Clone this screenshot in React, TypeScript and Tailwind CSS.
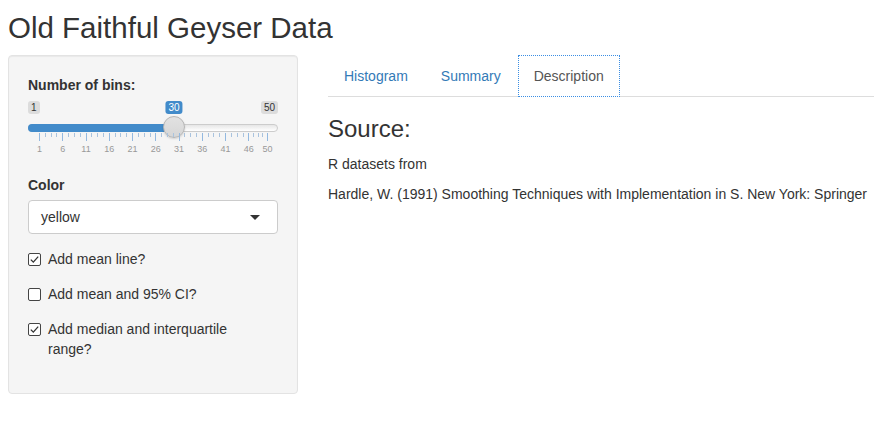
import React from "react";

const majors = [1, 6, 11, 16, 21, 26, 31, 36, 41, 46, 50];
const pos = (v: number) => 11 + ((v - 1) / 49) * 228;
const MINOR = 3;

function Slider() {
  const minors: number[] = [];
  for (let i = 0; i < majors.length - 1; i++) {
    const a = majors[i];
    const b = majors[i + 1];
    for (let z = 1; z <= MINOR; z++) minors.push(a + ((b - a) * z) / (MINOR + 1));
  }
  const hx = pos(30);
  return (
    <div className="relative h-[60px] w-full">
      <div className="flex justify-between pt-[1px]">
        <span className="rounded-[3px] bg-[rgba(0,0,0,0.1)] px-[3px] py-[1px] text-[10px] leading-[11px] text-[#333]">1</span>
        <span className="rounded-[3px] bg-[rgba(0,0,0,0.1)] px-[3px] py-[1px] text-[10px] leading-[11px] text-[#333]">50</span>
      </div>
      <span
        className="absolute top-[1px] -translate-x-1/2 rounded-[3px] bg-[#428bca] px-[3px] py-[1px] text-[10px] leading-[11px] text-white"
        style={{ left: hx }}
      >
        30
      </span>
      <div className="absolute left-0 right-0 top-[24px] h-[8px] rounded-full border border-[#ccc] bg-gradient-to-b from-[#e6e6e6] to-white" />
      <div className="absolute left-0 top-[24px] h-[8px] rounded-l-full bg-[#428bca]" style={{ width: hx }} />
      <div
        className="absolute top-[16px] h-[22px] w-[22px] -translate-x-1/2 rounded-full border border-[#b5b5b5] bg-gradient-to-b from-[#e2e2e2] to-[#d6d6d6] shadow-[0_1px_2px_rgba(0,0,0,0.15)]"
        style={{ left: hx }}
      />
      {majors.map((v) => (
        <div key={"M" + v} className="absolute top-[33px] h-[8px] w-px bg-[#93b9e0]" style={{ left: pos(v) }} />
      ))}
      {minors.map((v, i) => (
        <div key={"m" + i} className="absolute top-[33px] h-[4px] w-px bg-[#a9c3de]" style={{ left: pos(v) }} />
      ))}
      {majors.map((v) => (
        <span
          key={"L" + v}
          className="absolute top-[43px] -translate-x-1/2 text-[9px] leading-[12px] text-[#999]"
          style={{ left: pos(v) + 0.5 }}
        >
          {v}
        </span>
      ))}
    </div>
  );
}

function Check({ checked, children }: { checked: boolean; children: React.ReactNode }) {
  return (
    <div className="mb-[15px] flex items-start leading-[20px]">
      <span className="mr-[7px] mt-[4px] flex h-[13px] w-[13px] shrink-0 items-center justify-center rounded-[2px] border border-[#444] bg-white">
        {checked && (
          <svg width="11" height="11" viewBox="0 0 11 11">
            <path d="M1.8 5.6 L4.3 8.1 L9.2 2.6" fill="none" stroke="#333" strokeWidth="1.3" />
          </svg>
        )}
      </span>
      <span>{children}</span>
    </div>
  );
}

export default function App() {
  return (
    <div className="min-h-[421px] bg-white pl-[8px] font-['Liberation_Sans',Arial,sans-serif] text-[14px] leading-[20px] text-[#333]">
      <h2 className="pt-[11px] mb-[11px] text-[29.5px] font-normal leading-[33px]">Old Faithful Geyser Data</h2>
      <div className="flex gap-[30px]">
        <div className="w-[290px] shrink-0 rounded-[4px] border border-[#e3e3e3] bg-[#f5f5f5] px-[19px] pt-[19px] pb-[19px] shadow-[inset_0_1px_1px_rgba(0,0,0,0.05)]">
          <div className="mb-[5px] font-bold">Number of bins:</div>
          <Slider />
          <div className="mb-[5px] mt-[15px] font-bold">Color</div>
          <div className="mb-[15px] flex h-[34px] items-center justify-between rounded-[4px] border border-[#ccc] bg-white pl-[12px] pr-[17px]">
            <span>yellow</span>
            <svg width="10" height="5" viewBox="0 0 10 5">
              <path d="M0 0 L10 0 L5 5 Z" fill="#333" />
            </svg>
          </div>
          <Check checked={true}>Add mean line?</Check>
          <Check checked={false}>Add mean and 95% CI?</Check>
          <Check checked={true}>
            Add median and interquartile
            <br />
            range?
          </Check>
        </div>
        <div className="flex-1">
          <div className="flex border-b border-[#ddd]">
            <div className="mb-[-1px] mr-[1px] border border-transparent px-[15px] py-[10px] text-[#337ab7]">Histogram</div>
            <div className="mb-[-1px] mr-[1px] border border-transparent px-[15px] py-[10px] text-[#337ab7]">Summary</div>
            <div className="mb-[-1px] border border-dotted border-[#3b8ee3] bg-white px-[15px] py-[10px] text-[#555]">
              Description
            </div>
          </div>
          <h3 className="mt-[19px] mb-[12px] text-[24px] font-normal leading-[26px]">Source:</h3>
          <p className="mb-[10px]">R datasets from</p>
          <p className="mb-[10px]">Hardle, W. (1991) Smoothing Techniques with Implementation in S. New York: Springer</p>
        </div>
      </div>
    </div>
  );
}
